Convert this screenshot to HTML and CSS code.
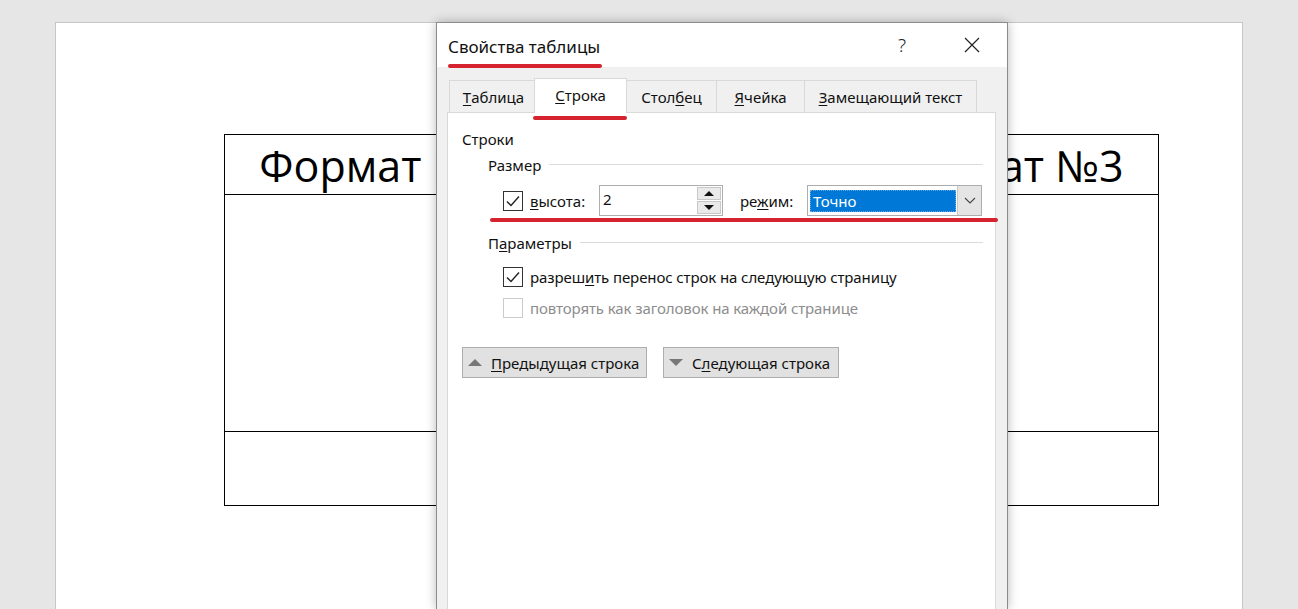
FILE: index.html
```html
<!DOCTYPE html>
<html lang="ru">
<head>
<meta charset="utf-8">
<title>Свойства таблицы</title>
<link rel="stylesheet" href="styles.css">
</head>
<body>
<div class="page">
  <table class="doc">
    <tr class="r1"><td>Формат №1</td><td>Формат №2</td><td>Формат №3</td></tr>
    <tr class="r2"><td></td><td></td><td></td></tr>
    <tr class="r3"><td></td><td></td><td></td></tr>
  </table>
</div>

<div class="dialog">
  <div class="titlebar">
    <span class="title">Свойства таблицы</span>
    <span class="help">?</span>
    <span class="close">
      <svg width="16" height="16" viewBox="0 0 16 16"><path d="M1 1 L15 15 M15 1 L1 15" stroke="#222" stroke-width="1.2" fill="none"/></svg>
    </span>
  </div>
  <div class="dbody">
    <div class="tabs">
      <div class="tab t1"><u>Т</u>аблица</div>
      <div class="tab t2 active"><u>С</u>трока</div>
      <div class="tab t3">Стол<u>б</u>ец</div>
      <div class="tab t4"><u>Я</u>чейка</div>
      <div class="tab t5"><u>З</u>амещающий текст</div>
    </div>
    <div class="panel">
      <div class="section">Строки</div>
      <div class="group-head"><span>Размер</span><i class="sep"></i></div>
      <div class="size-row">
        <span class="cb checked"><svg width="14" height="12" viewBox="0 0 14 12"><path d="M1 6.5 L5 10.5 L13 1.5" stroke="#222" stroke-width="1.4" fill="none"/></svg></span>
        <span class="lbl lbl-h"><u>в</u>ысота:</span>
        <span class="spin">
          <span class="spin-val">2</span>
          <span class="spin-btns">
            <span class="sb"><i class="up"></i></span>
            <span class="sb"><i class="down"></i></span>
          </span>
        </span>
        <span class="lbl lbl-m">ре<u>ж</u>им:</span>
        <span class="select">
          <span class="sel-val">Точно</span>
          <span class="sel-btn"><svg width="12" height="7" viewBox="0 0 12 7"><path d="M1 1 L6 6 L11 1" stroke="#444" stroke-width="1.1" fill="none"/></svg></span>
        </span>
      </div>
      <div class="group-head g2"><span>П<u>а</u>раметры</span><i class="sep"></i></div>
      <div class="opt o1">
        <span class="cb checked"><svg width="14" height="12" viewBox="0 0 14 12"><path d="M1 6.5 L5 10.5 L13 1.5" stroke="#222" stroke-width="1.4" fill="none"/></svg></span>
        <span>разреш<u>и</u>ть перенос строк на следующую страницу</span>
      </div>
      <div class="opt o2 disabled">
        <span class="cb"></span>
        <span>повторять как заголовок на каждой странице</span>
      </div>
      <div class="buttons">
        <span class="btn b1"><i class="tri-up"></i><span><u>П</u>редыдущая строка</span></span>
        <span class="btn b2"><i class="tri-down"></i><span>С<u>л</u>едующая строка</span></span>
      </div>
    </div>
  </div>
  <span class="mark mark-title"></span>
  <span class="mark mark-tab"></span>
  <span class="mark mark-row"></span>
</div>
</body>
</html>
```

FILE: styles.css
```css
html, body {
  margin: 0;
  padding: 0;
}
body {
  width: 1298px;
  height: 609px;
  overflow: hidden;
  background: #e6e6e6;
  position: relative;
  font-family: "Noto Sans", "Open Sans", sans-serif;
}
u { text-decoration: underline; text-underline-offset: 2px; text-decoration-thickness: 1px; }

.page {
  margin: 22px 0 0 55px;
  width: 1188px;
  height: 587px;
  overflow: hidden;
  background: #fff;
  border: 1px solid #c6c6c6;
  border-bottom: none;
  box-sizing: border-box;
  padding-top: 111px;
  padding-left: 168px;
}
.doc {
  border-collapse: collapse;
  width: 935px;
  table-layout: fixed;
}
.doc td {
  border: 1px solid #000;
  padding: 0;
  text-align: center;
  white-space: nowrap;
  font-family: "Open Sans", "Noto Sans", sans-serif;
  font-size: 43px;
  color: #000;
}
.doc .r1 td { height: 57px; line-height: 57px; padding-top: 2px; }
.doc .r2 td { height: 236px; }
.doc .r3 td { height: 73px; }

.dialog {
  position: absolute;
  left: 436px;
  top: 22px;
  width: 572px;
  height: 587px;
  box-sizing: border-box;
  border: 1px solid #8c8c8c;
  border-bottom: none;
  background: #f0f0f0;
  box-shadow: 0 0 10px rgba(0,0,0,0.28);
  display: flex;
  flex-direction: column;
}
.titlebar {
  height: 44px;
  background: #fff;
  display: flex;
  align-items: center;
  padding-left: 11px;
}
.title {
  flex: 1;
  font-size: 17px;
  color: #111;
  padding-top: 2px;
}
.help {
  width: 30px;
  text-align: center;
  font-size: 19px;
  font-weight: 300;
  color: #222;
  margin-right: 38px;
}
.close {
  width: 34px;
  display: flex;
  justify-content: center;
  margin-right: 18px;
}
.dbody {
  flex: 1;
  padding: 11px 11px 0 10px;
  display: flex;
  flex-direction: column;
}
.tabs {
  display: flex;
  align-items: flex-end;
  height: 34px;
  padding-left: 2px;
  position: relative;
  z-index: 1;
}
.tab {
  height: 32px;
  box-sizing: border-box;
  border: 1px solid #d9d9d9;
  border-bottom: none;
  border-left: none;
  background: #f0f0f0;
  font-size: 15px;
  color: #111;
  display: flex;
  align-items: center;
  justify-content: center;
  padding-top: 1px;
}
.tab.t1 { width: 86px; border-left: 1px solid #d9d9d9; padding-left: 3px; }
.tab.t2 { width: 93px; }
.tab.t3 { width: 90px; }
.tab.t4 { width: 88px; }
.tab.t5 { width: 172px; }
.tab.active {
  height: 35px;
  background: #fff;
  margin-bottom: -1px;
  border-left: 1px solid #d9d9d9;
  margin-left: -1px;
  padding-top: 0;
  padding-bottom: 3px;
}
.panel {
  flex: 1;
  background: #fff;
  border: 1px solid #d9d9d9;
  border-bottom: none;
  padding: 16px 12px 0 14px;
  font-size: 15px;
  color: #111;
}
.section {
  height: 20px;
  line-height: 20px;
}
.group-head {
  display: flex;
  align-items: center;
  height: 20px;
  line-height: 20px;
  margin-top: 6px;
  padding-left: 26px;
}
.group-head.g2 { margin-top: 17px; }
.sep {
  flex: 1;
  height: 1px;
  background: #dcdcdc;
  margin-left: 8px;
  margin-top: -2px;
}
.size-row {
  display: flex;
  align-items: center;
  height: 31px;
  margin-top: 10px;
  padding-left: 41px;
}
.cb {
  width: 20px;
  height: 20px;
  box-sizing: border-box;
  border: 1px solid #333;
  background: #fff;
  display: flex;
  align-items: center;
  justify-content: center;
  flex: none;
}
.lbl-h { margin-left: 7px; width: 69px; }
.lbl-m { margin-left: 17px; width: 67px; }
.spin {
  width: 124px;
  height: 31px;
  box-sizing: border-box;
  border: 1px solid #adadad;
  display: flex;
}
.spin-val {
  flex: 1;
  padding-left: 3px;
  line-height: 27px;
}
.spin-btns {
  width: 24px;
  display: flex;
  flex-direction: column;
  gap: 1px;
  padding: 1px 1px 1px 0;
}
.sb {
  flex: 1;
  background: #eaeaea;
  border: 1px solid #c8c8c8;
  display: flex;
  align-items: center;
  justify-content: center;
}
.sb i { width: 0; height: 0; border-left: 5px solid transparent; border-right: 5px solid transparent; }
.sb .up { border-bottom: 5px solid #111; }
.sb .down { border-top: 5px solid #111; }
.select {
  width: 175px;
  height: 31px;
  box-sizing: border-box;
  border: 1px solid #adadad;
  display: flex;
  padding: 4px 0 3px 2px;
}
.sel-val {
  width: 146px;
  background: #0078d7;
  color: #fff;
  border: 1px dotted #6aa6e0;
  box-sizing: border-box;
  line-height: 20px;
  padding-left: 2px;
}
.sel-btn {
  flex: 1;
  margin: -4px 0 -3px 1px;
  background: #e5e5e5;
  border-left: 1px solid #c8c8c8;
  display: flex;
  align-items: center;
  justify-content: center;
}
.opt {
  display: flex;
  align-items: center;
  gap: 7px;
  height: 20px;
  padding-left: 41px;
  letter-spacing: -0.1px;
}
.opt.o1 { margin-top: 14px; }
.opt.o2 { margin-top: 11px; }
.opt.disabled { color: #8d8d8d; }
.opt.disabled .cb { border-color: #cccccc; }
.buttons {
  display: flex;
  gap: 16px;
  margin-top: 29px;
}
.btn {
  height: 31px;
  box-sizing: border-box;
  background: #e1e1e1;
  border: 1px solid #adadad;
  display: flex;
  align-items: center;
  padding-left: 5px;
  color: #111;
}
.btn.b1 { width: 185px; }
.btn.b2 { width: 176px; }
.btn i { width: 0; height: 0; border-left: 7px solid transparent; border-right: 7px solid transparent; margin-right: 9px; }
.tri-up { border-bottom: 7px solid #777; }
.tri-down { border-top: 7px solid #777; }

.mark {
  position: absolute;
  height: 4px;
  background: #d5232f;
  border-radius: 2px;
  z-index: 3;
}
.mark-title { left: 11px; top: 41px; width: 154px; }
.mark-tab { left: 96px; top: 93px; width: 94px; }
.mark-row { left: 53px; top: 195px; width: 508px; }
```
